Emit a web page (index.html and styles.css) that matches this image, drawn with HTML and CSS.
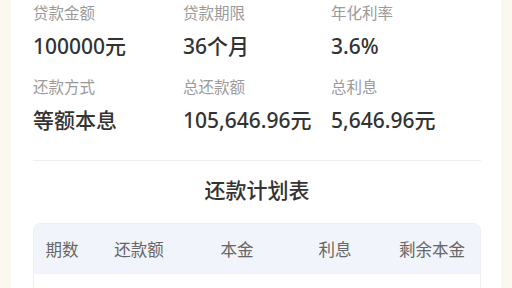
FILE: index.html
```html
<!DOCTYPE html>
<html lang="zh">
<head>
<meta charset="utf-8">
<link rel="stylesheet" href="styles.css">
</head>
<body>
<div class="page">
  <div class="card">
    <div class="summary">
      <div class="item"><div class="label">贷款金额</div><div class="value">100000元</div></div>
      <div class="item"><div class="label">贷款期限</div><div class="value">36个月</div></div>
      <div class="item"><div class="label">年化利率</div><div class="value">3.6%</div></div>
      <div class="item"><div class="label">还款方式</div><div class="value">等额本息</div></div>
      <div class="item"><div class="label">总还款额</div><div class="value">105,646.96元</div></div>
      <div class="item"><div class="label">总利息</div><div class="value">5,646.96元</div></div>
    </div>
    <div class="divider"></div>
    <div class="title">还款计划表</div>
    <div class="table">
      <div class="thead">
        <div class="th">期数</div>
        <div class="th">还款额</div>
        <div class="th">本金</div>
        <div class="th">利息</div>
        <div class="th">剩余本金</div>
      </div>
      <div class="tbody"></div>
    </div>
  </div>
</div>
</body>
</html>
```
FILE: styles.css
```css
html, body {
  margin: 0;
  padding: 0;
}
body {
  background: #fbf8ef;
  font-family: "Noto Sans", "Noto Sans CJK SC", sans-serif;
  width: 512px;
  height: 288px;
  overflow: hidden;
}
.page {
  padding: 0 11px;
}
.card {
  background: #ffffff;
  padding: 3px 20px 0 22px;
  height: 285px;
}
.summary {
  display: grid;
  grid-template-columns: 150px 148px 1fr;
  row-gap: 17px;
}
.item {
  display: flex;
  flex-direction: column;
  gap: 9px;
}
.label {
  font-size: 15.5px;
  line-height: 20px;
  color: #9a9a9a;
}
.value {
  font-size: 21px;
  line-height: 28px;
  color: #333333;
  font-weight: 500;
}
.divider {
  height: 1px;
  background: #efefef;
  margin-top: 26px;
}
.title {
  margin-top: 15px;
  text-align: center;
  font-size: 21px;
  line-height: 28px;
  font-weight: 500;
  color: #333333;
}
.table {
  margin-top: 19px;
  border: 1px solid #eceff4;
  border-bottom: none;
  border-radius: 8px 8px 0 0;
  overflow: hidden;
  width: 448px;
  box-sizing: border-box;
}
.thead {
  display: grid;
  grid-template-columns: 56px 98px 98px 98px 96px;
  background: #f1f4fa;
  height: 50px;
  align-items: center;
}
.th {
  text-align: center;
  font-size: 16.5px;
  color: #666666;
}
.tbody {
  height: 14px;
}
```
